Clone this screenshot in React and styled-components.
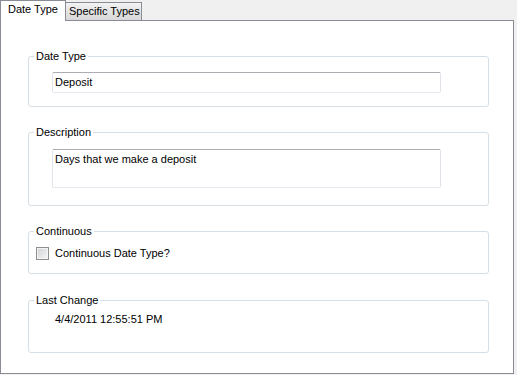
import React from "react"
import styled, { createGlobalStyle, css } from "styled-components"

const GlobalStyle = createGlobalStyle`
  body {
    margin: 0;
    background: #f0f0f0;
    font-family: "Liberation Sans", Arial, sans-serif;
    font-size: 11px;
    color: #000;
  }
`

export default () => {
  return (
    <Window>
      <GlobalStyle />
      <TabStrip>
        <Tab $active>Date Type</Tab>
        <Tab>Specific Types</Tab>
      </TabStrip>
      <Panel>
        <Group $top={29} $pad="9px 0 13px">
          <Legend>Date Type</Legend>
          <TextBox>Deposit</TextBox>
        </Group>
        <Group $top={19} $pad="10px 0 17px">
          <Legend>Description</Legend>
          <TextArea>Days that we make a deposit</TextArea>
        </Group>
        <Group $top={19} $pad="9px 0 13px">
          <Legend>Continuous</Legend>
          <CheckRow>
            <CheckBox />
            <span>Continuous Date Type?</span>
          </CheckRow>
        </Group>
        <Group $top={20} $pad="6px 0 26px">
          <Legend>Last Change</Legend>
          <Value>4/4/2011 12:55:51 PM</Value>
        </Group>
      </Panel>
    </Window>
  )
}

const Window = styled.div`
  width: 517px;
  height: 375px;
  background: #f0f0f0;
  display: flex;
  flex-direction: column;
`

const TabStrip = styled.div`
  display: flex;
  align-items: flex-end;
  height: 20px;
`

const Tab = styled.div`
  box-sizing: border-box;
  line-height: 13px;
  white-space: nowrap;
  border: 1px solid #898c95;
  border-bottom: none;
  ${({ $active }) =>
    $active
      ? css`
          width: 66px;
          height: 21px;
          margin-bottom: -1px;
          padding: 2px 0 0 7px;
          background: #fff;
          position: relative;
          z-index: 1;
        `
      : css`
          width: 76px;
          height: 18px;
          padding: 2px 0 0 3px;
          border-left: none;
          background: linear-gradient(#f3f3f3, #e3e3e3 50%, #d9d9d9);
        `}
`

const Panel = styled.div`
  box-sizing: border-box;
  width: 514px;
  height: 354px;
  border: 1px solid #898c95;
  background: #fff;
  padding: 0 24px 0 27px;
  display: flex;
  flex-direction: column;
`

const Group = styled.fieldset`
  margin: ${({ $top }) => $top}px 0 0;
  padding: ${({ $pad }) => $pad};
  border: 1px solid #d5dfe5;
  border-radius: 3px;
  min-width: 0;
`

const Legend = styled.legend`
  line-height: 13px;
  padding: 0 2px;
  margin-left: 5px;
`

const TextBox = styled.div`
  box-sizing: border-box;
  width: 389px;
  height: 21px;
  margin-left: 23px;
  padding: 3px 0 0 2px;
  line-height: 13px;
  border: 1px solid #e2e3ea;
  border-top-color: #abadb3;
  border-bottom-color: #e3e9ef;
  border-radius: 2px;
`

const TextArea = styled(TextBox)`
  height: 39px;
  padding-top: 3px;
`

const CheckRow = styled.div`
  display: flex;
  align-items: center;
  gap: 6px;
  margin-left: 7px;
  line-height: 13px;
`

const CheckBox = styled.span`
  box-sizing: border-box;
  width: 13px;
  height: 13px;
  border: 1px solid #8f8f8f;
  background: linear-gradient(135deg, #cfd1d4, #f7f7f7);
  box-shadow: inset 0 0 0 1px #f4f4f4;
`

const Value = styled.div`
  margin-left: 26px;
  line-height: 13px;
`
